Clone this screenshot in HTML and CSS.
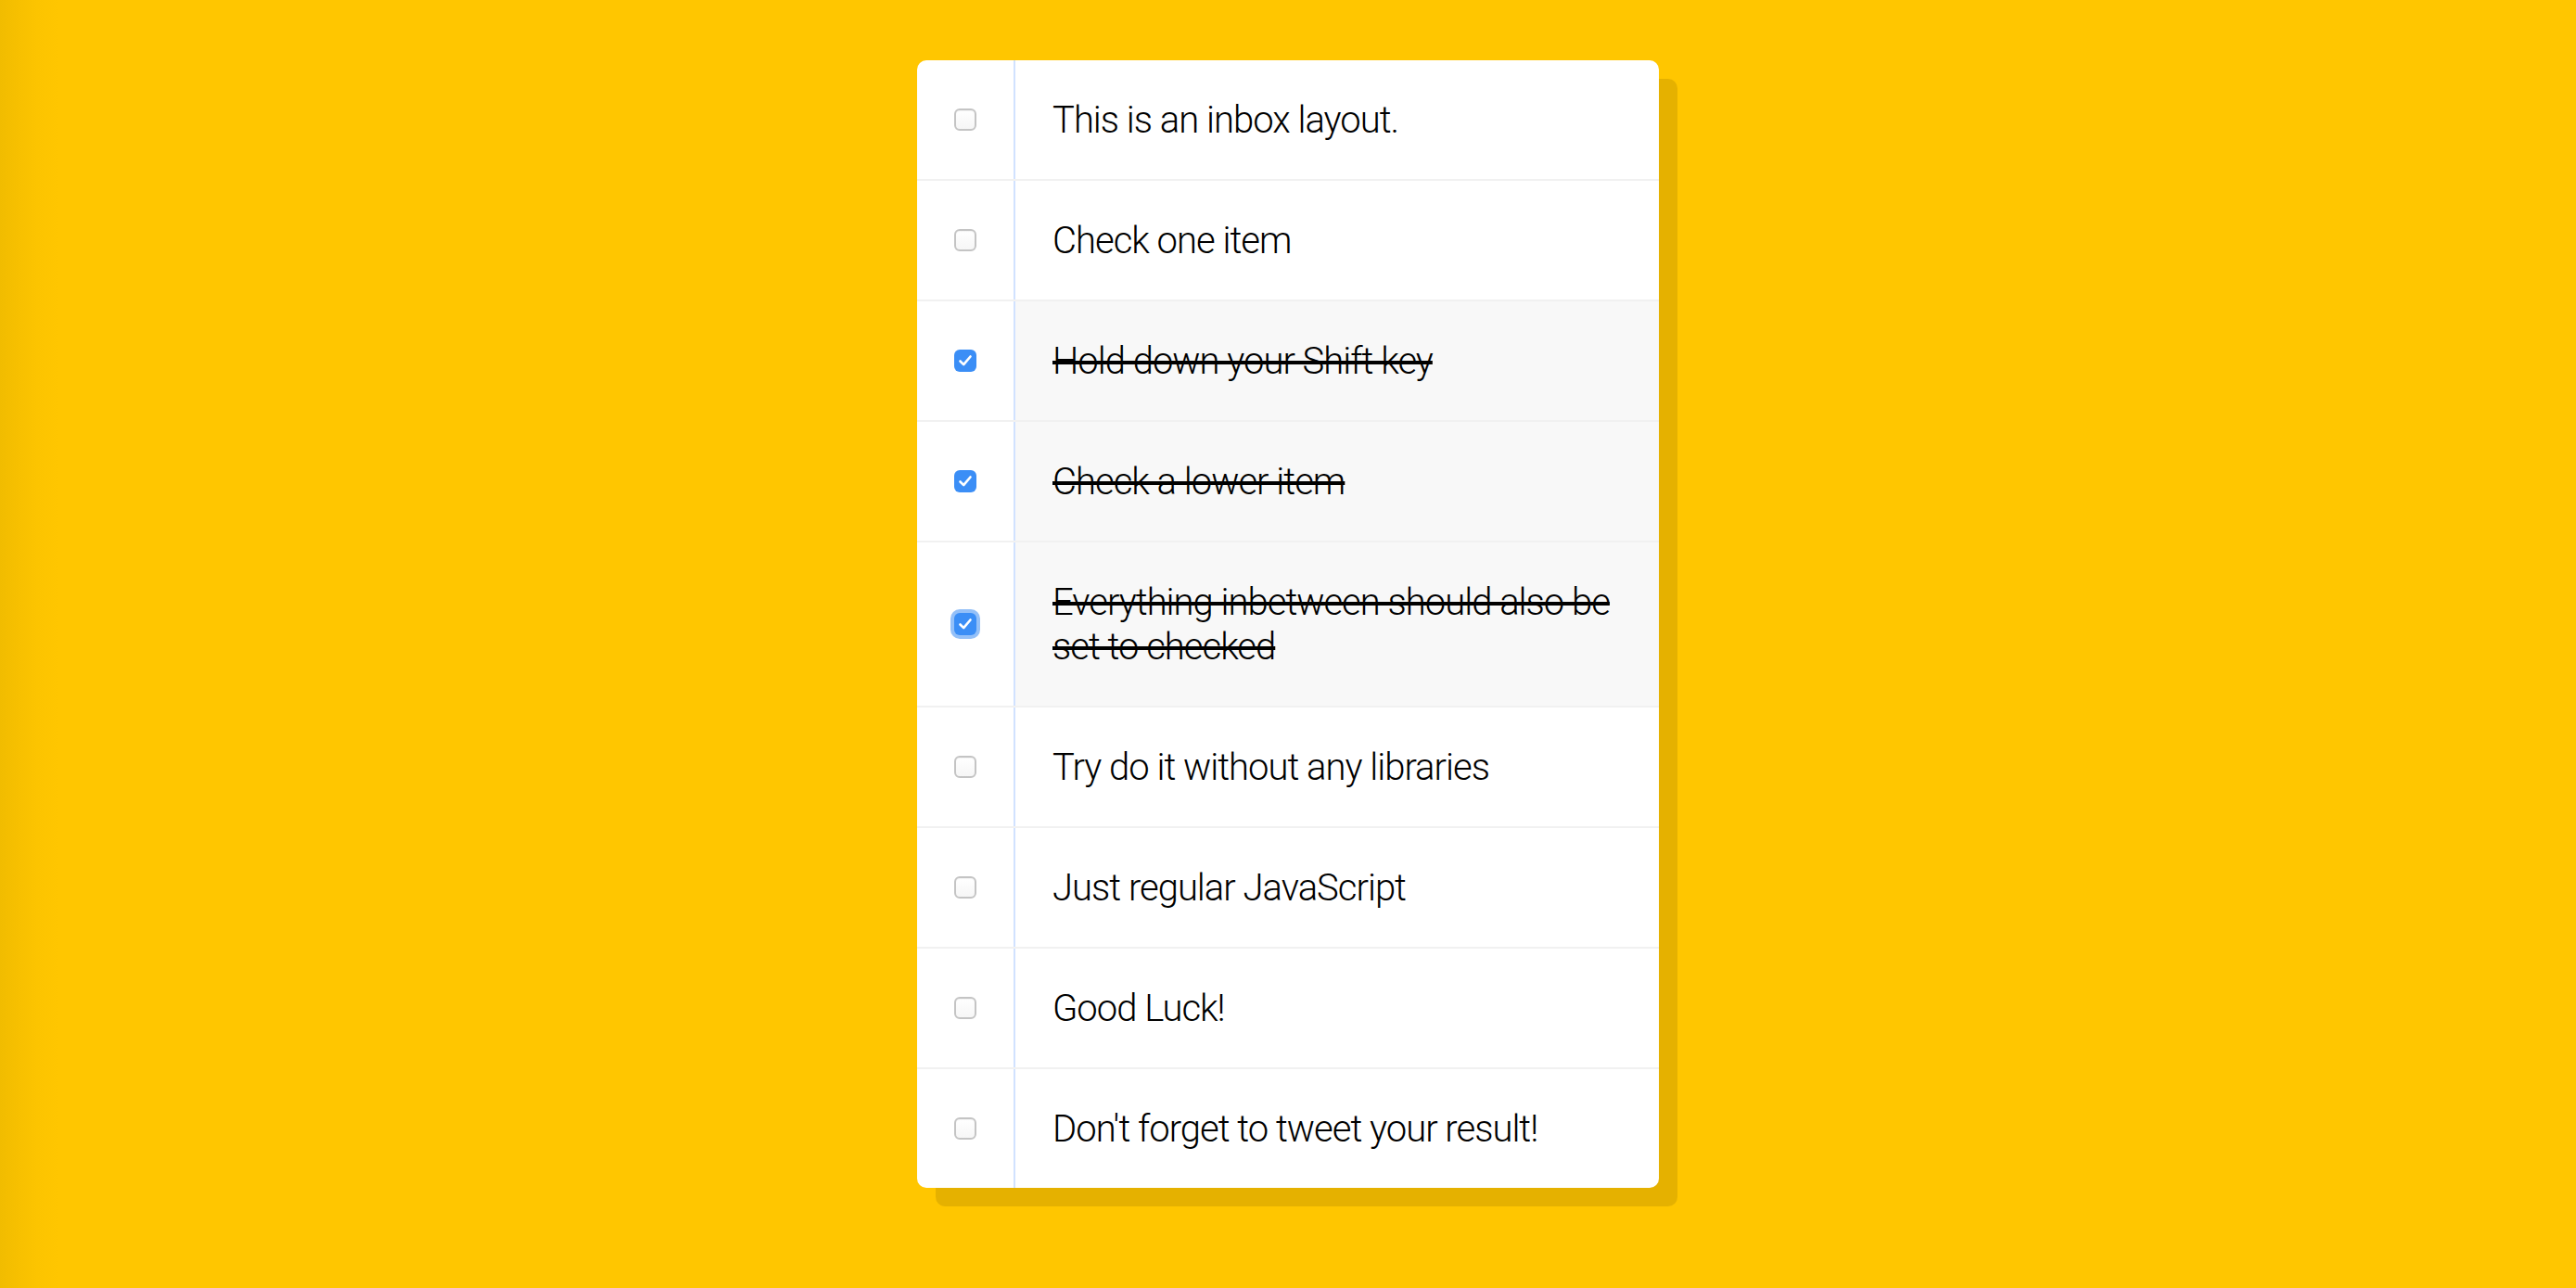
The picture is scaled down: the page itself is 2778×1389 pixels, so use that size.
FILE: index.html
```html
<!DOCTYPE html>
<html lang="en">
<head>
<meta charset="utf-8">
<title>Hold Shift to Check Checkboxes</title>
<link rel="stylesheet" href="styles.css">
</head>
<body>
<div class="inbox">
  <div class="item">
    <span class="box"></span>
    <p>This is an inbox layout.</p>
  </div>
  <div class="item">
    <span class="box"></span>
    <p>Check one item</p>
  </div>
  <div class="item checked">
    <span class="box"><svg viewBox="0 0 24 24"><path d="M6.5 12.5 L10.2 16.2 L17.5 7.5" /></svg></span>
    <p>Hold down your Shift key</p>
  </div>
  <div class="item checked">
    <span class="box"><svg viewBox="0 0 24 24"><path d="M6.5 12.5 L10.2 16.2 L17.5 7.5" /></svg></span>
    <p>Check a lower item</p>
  </div>
  <div class="item checked">
    <span class="box focus"><svg viewBox="0 0 24 24"><path d="M6.5 12.5 L10.2 16.2 L17.5 7.5" /></svg></span>
    <p>Everything inbetween should also be set to checked</p>
  </div>
  <div class="item">
    <span class="box"></span>
    <p>Try do it without any libraries</p>
  </div>
  <div class="item">
    <span class="box"></span>
    <p>Just regular JavaScript</p>
  </div>
  <div class="item">
    <span class="box"></span>
    <p>Good Luck!</p>
  </div>
  <div class="item">
    <span class="box"></span>
    <p>Don't forget to tweet your result!</p>
  </div>
</div>
</body>
</html>
```
FILE: styles.css
```css
html {
  background: #ffc600 linear-gradient(to right, #f1bc00 0, #f7c000 20px, #fcc400 40px, #ffc600 64px) no-repeat;
  min-height: 100%;
}

body {
  margin: 0;
  padding: 65px 0 100px;
  font-family: "Helvetica Neue", Roboto, "Liberation Sans", sans-serif;
}

.inbox {
  width: 800px;
  margin: 0 auto;
  background: #ffffff;
  border-radius: 10px;
  box-shadow: 20px 20px 0 rgba(0, 0, 0, 0.1);
}

.item {
  display: flex;
  align-items: center;
  border-bottom: 2px solid #f1f1f1;
}

.item:last-child {
  border-bottom: 0;
}

.box {
  flex: none;
  width: 24px;
  height: 24px;
  margin: 0 40px;
  box-sizing: border-box;
  border-radius: 6px;
  border: 2px solid #c4c4c4;
  background: linear-gradient(#ffffff, #f6f6f6);
  box-shadow: inset 0 1px 1px rgba(0, 0, 0, 0.05);
  display: flex;
  align-items: center;
  justify-content: center;
}

.checked .box {
  border: 0;
  background: #3b8ef6;
  box-shadow: none;
}

.checked .box.focus {
  box-shadow: 0 0 0 4px #94c0f8;
}

.box svg {
  width: 24px;
  height: 24px;
  fill: none;
  stroke: #ffffff;
  stroke-width: 2.6;
  stroke-linecap: round;
  stroke-linejoin: round;
}

p {
  flex: 1;
  margin: 0;
  padding: 41px 40px 39px;
  font-size: 40px;
  font-weight: 300;
  line-height: 48px;
  color: #000000;
  border-left: 2px solid #d1e2ff;
  letter-spacing: -1px;
}

.checked p {
  background: #f8f8f8;
  text-decoration: line-through;
  text-decoration-thickness: 4px;
}

.item:last-child p {
  border-bottom-right-radius: 10px;
}
```
